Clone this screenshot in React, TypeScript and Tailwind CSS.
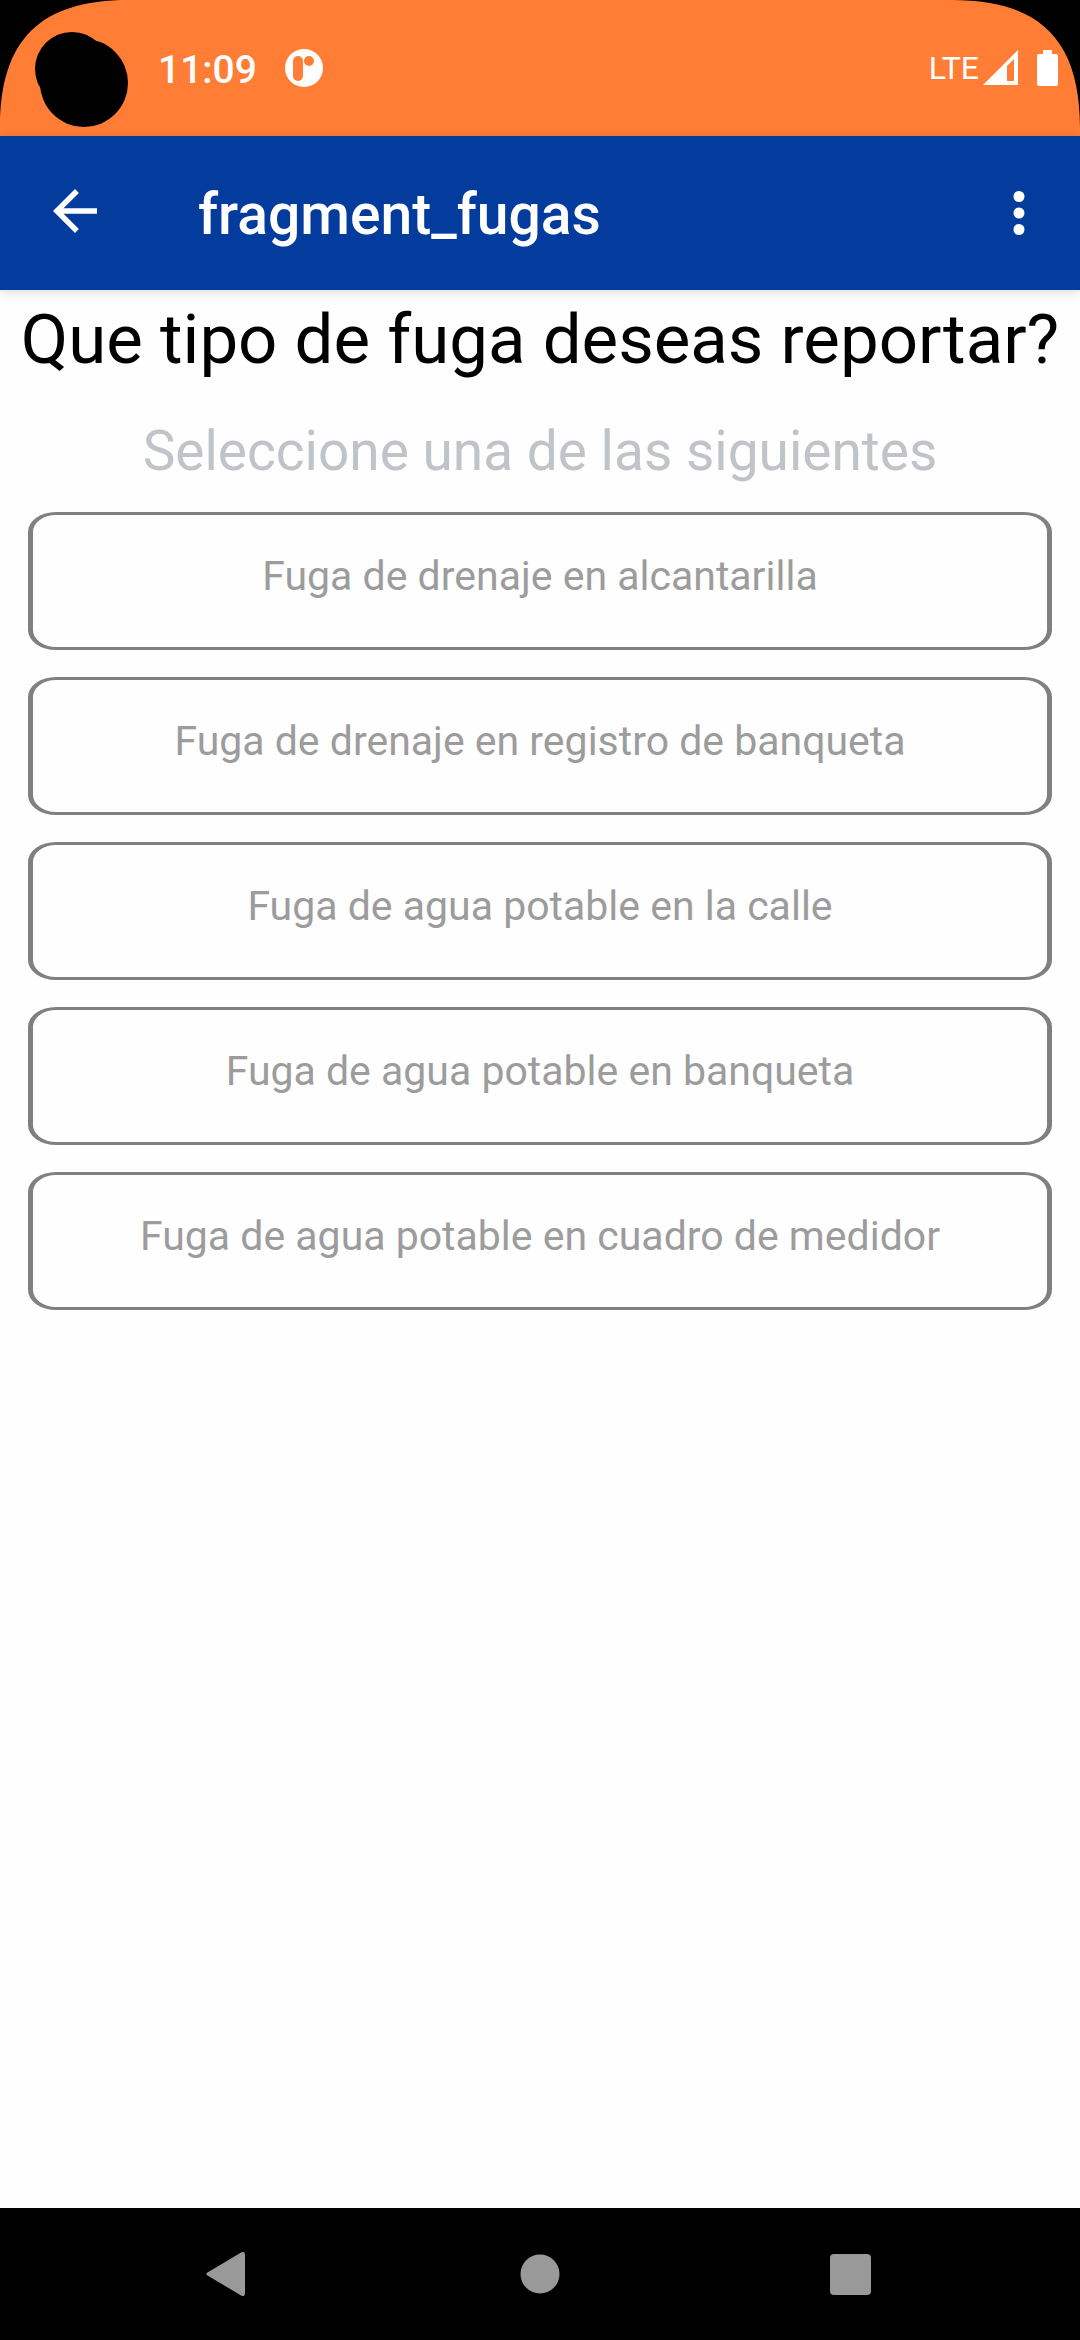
import React from "react";
import { clsx } from "clsx";

const leakTypes = [
  { id: "alcantarilla", label: "Fuga de drenaje en alcantarilla" },
  { id: "registro", label: "Fuga de drenaje en registro de banqueta" },
  { id: "calle", label: "Fuga de agua potable en la calle" },
  { id: "banqueta", label: "Fuga de agua potable en banqueta" },
  { id: "medidor", label: "Fuga de agua potable en cuadro de medidor" },
];

const ScreenCorner = ({ className }: { className?: string }) => (
  <svg
    className={clsx("absolute top-0 size-32", className)}
    viewBox="0 0 128 128"
    aria-hidden="true"
  >
    <path d="M0 0H128C40 0 0 40 0 128Z" fill="#000" />
  </svg>
);

const StatusBar = () => (
  <div className="relative flex h-[136px] shrink-0 items-center bg-[#ff7d34] pr-[22px] text-white">
    <ScreenCorner className="left-0" />
    <ScreenCorner className="right-0 -scale-x-100" />
    {/* Camera cutout */}
    <svg className="h-[136px] w-[158px]" viewBox="0 0 158 136" aria-hidden="true">
      <circle cx="72" cy="69" r="37" />
      <circle cx="84" cy="83" r="44" />
    </svg>
    <span className="pt-1 text-[39px] leading-[48px] font-medium">11:09</span>
    <svg className="ml-7 size-[38px]" viewBox="0 0 38 38" aria-hidden="true">
      <circle cx="19" cy="19" r="19" fill="#fff" />
      <rect x="8" y="7" width="10" height="25" rx="5" fill="#ff7d34" />
      <circle cx="24" cy="12" r="5" fill="#ff7d34" />
    </svg>
    <div className="relative ml-auto flex items-center">
      <span className="text-[32px] leading-[40px]">LTE</span>
      <svg className="ml-1 size-9" viewBox="0 0 36 36" aria-hidden="true">
        <path
          d="M35 0V35H0ZM31 9L24 16V31H31Z"
          fill="#fff"
          fillRule="evenodd"
        />
      </svg>
      <svg className="ml-[18px] h-9 w-[21px]" viewBox="0 0 21 36" aria-hidden="true">
        <path
          d="M6 0H15V4H19Q21 4 21 6V34Q21 36 19 36H2Q0 36 0 34V6Q0 4 2 4H6Z"
          fill="#fff"
        />
      </svg>
    </div>
  </div>
);

const AppBar = () => (
  <header className="relative flex h-[154px] shrink-0 items-center bg-[#043c9e] text-white shadow-[0_2px_10px_rgba(0,0,0,0.15)]">
    <button type="button" aria-label="Volver" className="flex h-full w-[150px] items-center justify-center pb-1">
      <svg className="size-[66px]" viewBox="0 0 24 24" fill="currentColor" aria-hidden="true">
        <path d="M20 11H7.83l5.59-5.59L12 4l-8 8 8 8 1.41-1.41L7.83 13H20v-2z" />
      </svg>
    </button>
    <h1 className="ml-12 pt-1 text-[57px] leading-[64px] font-medium">fragment_fugas</h1>
    <button type="button" aria-label="Más opciones" className="ml-auto flex h-full w-[122px] items-center justify-center">
      <svg className="size-[66px]" viewBox="0 0 24 24" fill="currentColor" aria-hidden="true">
        <circle cx="12" cy="6" r="2" />
        <circle cx="12" cy="12" r="2" />
        <circle cx="12" cy="18" r="2" />
      </svg>
    </button>
  </header>
);

const NavigationBar = () => (
  <nav className="grid h-[132px] shrink-0 grid-cols-3 bg-black px-[72px] text-[#999999]">
    <button type="button" aria-label="Atrás" className="flex items-center justify-center">
      <svg className="size-12" viewBox="0 0 48 48" fill="currentColor" aria-hidden="true">
        <path d="M3.500 22.500L37.500 2.300Q41 1 41 5V43Q41 47 37.500 45.700L3.500 25.500Q1 24 3.500 22.500Z" />
      </svg>
    </button>
    <button type="button" aria-label="Inicio" className="flex items-center justify-center">
      <svg className="size-12" viewBox="0 0 48 48" fill="currentColor" aria-hidden="true">
        <circle cx="24" cy="24" r="19.500" />
      </svg>
    </button>
    <button type="button" aria-label="Recientes" className="flex items-center justify-center">
      <svg className="size-12" viewBox="0 0 48 48" fill="currentColor" aria-hidden="true">
        <rect x="2" y="4" width="41" height="41" rx="4" />
      </svg>
    </button>
  </nav>
);

const App = () => {
  return (
    <div className="flex min-h-screen flex-col bg-[#fefefe] font-[Roboto,sans-serif]">
      <StatusBar />
      <AppBar />
      <main className="flex grow flex-col px-7 pt-2">
        <h2 className="-mx-7 text-center text-[69px] leading-[84px] text-black">
          Que tipo de fuga deseas reportar?
        </h2>
        <p className="mt-9 text-center text-[55px] leading-[66px] text-[#c0c4c8]">
          Seleccione una de las siguientes
        </p>
        <ul className="mt-7 flex flex-col gap-[27px]">
          {leakTypes.map((item) => (
            <li key={item.id}>
              <button
                type="button"
                className="flex h-[138px] w-full items-center justify-center rounded-[28px/20px] border-x-5 border-y-3 border-[#808080] pb-[10px] text-[41px] leading-[48px] text-[#9c9c9c]"
              >
                {item.label}
              </button>
            </li>
          ))}
        </ul>
      </main>
      <NavigationBar />
    </div>
  );
};

export default App;
